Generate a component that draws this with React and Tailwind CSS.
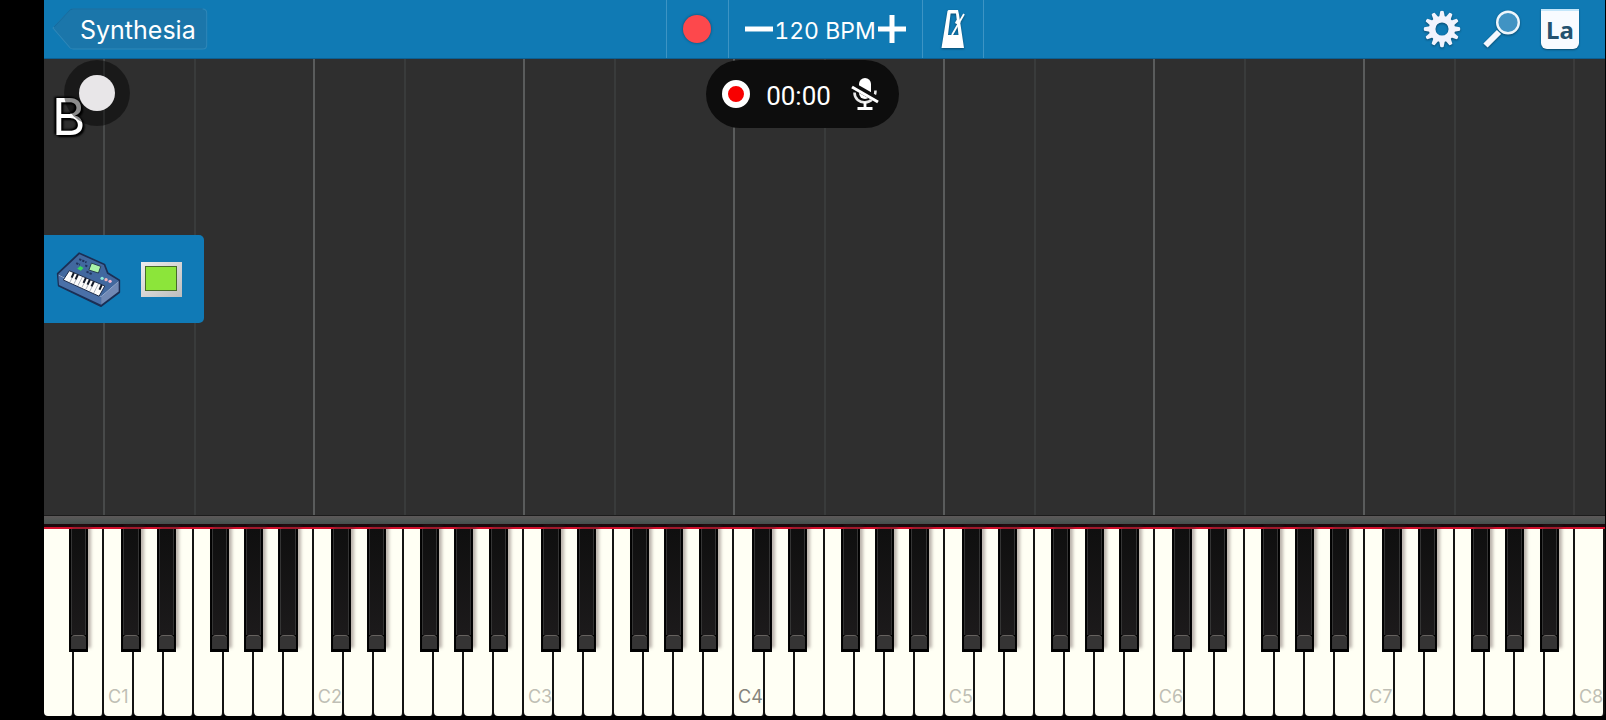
import React, { useState } from 'react';

const NOTES = ['C', 'D', 'E', 'F', 'G', 'A', 'B'];

// Where the sharp starts, relative to the white key on its left
const SHARP_LEFT = {
    C: 'left-[58%]',
    D: 'left-[76%]',
    F: 'left-[53%]',
    G: 'left-[67%]',
    A: 'left-[82%]'
};

// 52 white keys, A0 to C8
const whiteKeys = [
    { note: 'A', octave: 0 },
    { note: 'B', octave: 0 },
    ...[1, 2, 3, 4, 5, 6, 7].flatMap((octave) => NOTES.map((note) => ({ note, octave }))),
    { note: 'C', octave: 8 }
];

const octaves = [1, 2, 3, 4, 5, 6, 7];

const MetronomeIcon = () => (
    <svg viewBox="0 0 24 38" className="w-6 h-[38px] drop-shadow-[0_1px_1px_rgba(0,0,0,0.4)]">
        <path fill="#fff" fillRule="evenodd" d="M7.5 0h9.5l1 4.5 5 33.5H0.500L6.500 1zM9.600 3.500L7 25h10.500L15 3.500z" />
        <path d="M11 25L23 4" stroke="#fff" strokeWidth="1.800" />
        <path d="M15.500 10l4 2.200-1.600 3-4-2.200z" fill="#fff" />
    </svg>
);

const GearIcon = () => (
    <svg viewBox="0 0 38 38" className="w-[38px] h-[38px] drop-shadow-[0_1px_1px_rgba(0,0,0,0.4)]">
        {[0, 30, 60, 90, 120, 150, 180, 210, 240, 270, 300, 330].map((angle) => (
            <path key={angle} d="M16 8L17.300 1.200Q19 0.200 20.700 1.200L22 8z" fill="#f1f3fd" transform={`rotate(${angle} 19 19)`} />
        ))}
        <circle cx="19" cy="19" r="9.800" fill="none" stroke="#f1f3fd" strokeWidth="6.500" />
    </svg>
);

const SearchIcon = () => (
    <svg viewBox="0 0 38 38" className="w-[38px] h-[38px] drop-shadow-[0_1px_1px_rgba(0,0,0,0.4)]">
        <path d="M17 22L3.500 35.500" stroke="#f4f7fd" strokeWidth="6" />
        <circle cx="26" cy="12.500" r="10.800" fill="#4193c3" stroke="#eef6fc" strokeWidth="2.400" />
    </svg>
);

const MutedMicIcon = () => (
    <svg viewBox="0 0 28 32" className="w-7 h-8">
        <rect x="8" y="0" width="12" height="21" rx="6" fill="#fff" />
        <path d="M3.500 14.500C3.500 28 24.500 28 24.500 12.500" fill="none" stroke="#e8e8e8" strokeWidth="2.600" />
        <path d="M14 24v6M6.500 30.500h15" fill="none" stroke="#fff" strokeWidth="2.800" />
        <path d="M1 7L27 22" stroke="#0d0d0d" strokeWidth="6.500" />
        <path d="M1 9L27 24" stroke="#fff" strokeWidth="3" />
    </svg>
);

const SynthIcon = () => (
    <svg viewBox="0 0 196 168" className="w-[65px] h-14">
        <path d="M5 68L70 6l76 34 10 26 35 22v36l-55 42L8 104z" fill="#1c3158" stroke="#1b2f55" strokeWidth="5" strokeLinejoin="round" />
        <path d="M7 70L71 9l73 33 10 26 35 21-53 47z" fill="#41689f" />
        <path d="M7 72l129 65v25L9 102z" fill="#4a70a8" />
        <path d="M136 137l53-46v31l-53 40z" fill="#7189b5" />
        <path d="M8 72l128 65 52-45" fill="none" stroke="#90aad2" strokeWidth="3" />
        <path d="M40 59l107 46-17 31L22 87z" fill="#fbfbfb" stroke="#1d2c4b" strokeWidth="3" />
        {[1, 2, 3, 4, 5, 6, 7].map((i) => (
            <path key={i} d="M50 64l-14 27" stroke="#5b6577" strokeWidth="1.500" transform={`translate(${i * 12 - 6} ${i * 5.400 - 3})`} />
        ))}
        {[0, 1, 3, 4, 5, 7].map((i) => (
            <path key={i} d="M54 65l-7 15" stroke="#111827" strokeWidth="6" transform={`translate(${i * 12} ${i * 5.200})`} />
        ))}
        <path d="M107 36l28 10-7 20-29-9z" fill="#a9f3a8" stroke="#263c50" strokeWidth="3" />
        <path d="M73 45l10 6-8 8-11-6z" fill="#39da5a" />
        <path d="M70 24l22 10M61 36l11 5M88 43l9 4M92 62l18 8" stroke="#20335d" strokeWidth="6" strokeDasharray="7 3" />
        <circle cx="139" cy="82" r="5" fill="#8ee9d9" />
        <circle cx="151" cy="86" r="5" fill="#f2b5ba" />
        <circle cx="163" cy="91" r="5" fill="#f3b7d3" />
    </svg>
);

const Header = ({ bpm, setBpm, recording, setRecording }) => (
    <header className="h-[59px] shrink-0 bg-[#107ab4] border-b border-[#0c5f92] grid grid-cols-[1fr_auto_1fr] text-white">
        <div className="flex items-center pl-2">
            <a href="#home" className="relative flex items-center h-[42px] pl-7 pr-3">
                <svg viewBox="0 0 154 42" preserveAspectRatio="none" className="absolute inset-0 w-full h-full">
                    <path d="M1 20L18 2q1-1 3-1H149q4 0 4 4V37q0 4-4 4H21q-2 0-3-1z" fill="#1b76aa" stroke="#2f87b8" />
                    <path d="M2 19L18 2q1-1 3-1H149" fill="none" stroke="#12689c" />
                </svg>
                <span className="relative text-[25px] pt-1">Synthesia</span>
            </a>
        </div>

        <div className="flex border-x border-[#3d94c4]">
            <button type="button" aria-label="Record" onClick={() => setRecording(!recording)} className="w-[61px] flex items-center justify-center">
                <span className="w-7 h-7 rounded-full bg-[#fd484c] shadow-[0_0_3px_rgba(0,0,0,0.4)]" />
            </button>
            <div className="w-[195px] flex items-center justify-center border-x border-[#3d94c4]">
                <button type="button" aria-label="Slower" onClick={() => setBpm(bpm - 1)}>
                    <svg viewBox="0 0 28 28" className="w-7 h-7"><path d="M0 14h28" stroke="#fff" strokeWidth="5" /></svg>
                </button>
                <span className="w-[105px] text-center text-[23px] tabular-nums whitespace-nowrap pt-1">{bpm} BPM</span>
                <button type="button" aria-label="Faster" onClick={() => setBpm(bpm + 1)}>
                    <svg viewBox="0 0 28 28" className="w-7 h-7"><path d="M0 14h28M14 0v28" stroke="#fff" strokeWidth="5" /></svg>
                </button>
            </div>
            <button type="button" aria-label="Metronome" className="w-[60px] flex items-center justify-center">
                <MetronomeIcon />
            </button>
        </div>

        <div className="flex items-center justify-end gap-[21px] pr-[26px]">
            <button type="button" aria-label="Settings"><GearIcon /></button>
            <button type="button" aria-label="Search"><SearchIcon /></button>
            <button type="button" aria-label="Note labels" className="w-[38px] h-10 bg-[#f8fbff] border-t-2 border-[#c3e6fa] rounded-b-md shadow-[0_1px_2px_rgba(0,0,0,0.4)] text-[#24526f] text-2xl leading-8 font-bold font-['Noto_Sans',sans-serif]">
                La
            </button>
        </div>
    </header>
);

const Lanes = () => (
    <div className="absolute inset-0 flex">
        <div className="flex-[2] border-r-2 border-[#484a4a]" />
        {octaves.map((octave) => (
            <div key={octave} className={octave === 7 ? 'flex-[7] flex border-r-2 border-[#3b3b3b]' : 'flex-[7] flex border-r-2 border-[#5a5c5c]'}>
                <div className="flex-[3] border-r-2 border-[#393b3b]" />
                <div className="flex-[4]" />
            </div>
        ))}
        <div className="flex-1" />
    </div>
);

const Keyboard = () => (
    <div className="flex h-[191px] shrink-0 bg-black pb-1">
        {whiteKeys.map(({ note, octave }) => (
            <div key={note + octave} className="relative flex-1">
                <button
                    type="button"
                    aria-label={`${note}${octave}`}
                    className="w-full h-full flex items-end bg-[#fffff4] border-r-2 border-[#141412] rounded-b-[4px] pl-1 pb-[5px]"
                >
                    {note === 'C' && (
                        <span className={octave === 4 ? 'text-lg text-[#85847c]' : 'text-lg text-[#c0bfb5]'}>
                            C{octave}
                        </span>
                    )}
                </button>
                {SHARP_LEFT[note] && octave < 8 && (
                    <button
                        type="button"
                        aria-label={`${note}#${octave}`}
                        className={`absolute top-0 z-10 w-[64%] h-[123px] bg-black border-x border-[#050505] shadow-[3px_-4px_3px_rgba(60,40,40,0.35)] flex flex-col px-px pb-[3px] ${SHARP_LEFT[note]}`}
                    >
                        <span className="flex-1 w-full bg-linear-to-b from-[#0f0f0f] to-[#1c1a1b] border-x border-[#343434]" />
                        <span className="h-[14px] w-full bg-[#353434] border-t border-[#66625f] rounded-t-sm" />
                    </button>
                )}
            </div>
        ))}
    </div>
);

const App = () => {
    const [bpm, setBpm] = useState(120);
    const [recording, setRecording] = useState(false);
    const [muted, setMuted] = useState(true);

    return (
        <div className="min-h-screen flex flex-col bg-black pl-11 pr-px overflow-hidden font-[Inter,sans-serif]">
            <Header bpm={bpm} setBpm={setBpm} recording={recording} setRecording={setRecording} />

            <main className="relative flex-1 flex flex-col bg-[#2f2f2f] text-white">
                <Lanes />

                {/* Centred on the whole window, so make up for the black strip on the left */}
                <div className="relative flex items-center self-center gap-4 h-[68px] mt-px mr-11 pl-4 pr-5 rounded-full bg-[#0d0d0d] font-[Roboto,sans-serif]">
                    <span className="w-7 h-7 rounded-full border-[6px] border-white bg-[#f80000]" />
                    <time className="text-[26px] pt-1">00:00</time>
                    <button type="button" aria-label="Toggle microphone" aria-pressed={muted} onClick={() => setMuted(!muted)} className="ml-1">
                        <MutedMicIcon />
                    </button>
                </div>

                {/* Last detected note */}
                <span className="absolute left-2 top-7 text-[51px] leading-[60px] [text-shadow:0_0_3px_#000,0_0_3px_#000,2px_2px_2px_#000,-2px_-1px_2px_#000]">
                    B
                </span>

                {/* Touch indicator */}
                <div className="absolute left-5 top-px w-[66px] h-[66px] rounded-full bg-black/45 flex items-center justify-center">
                    <span className="w-9 h-9 rounded-full bg-[#e8e6e8]" />
                </div>

                <section className="relative mt-[107px] w-40 h-[88px] flex items-center gap-5 pl-3 rounded-r-[5px] bg-[#107ab6]">
                    <SynthIcon />
                    <button type="button" aria-label="Track colour" className="w-[41px] h-[35px] bg-linear-to-br from-[#eeeeee] to-[#bdbdbd] flex pl-1 pt-1">
                        <span className="w-8 h-[25px] bg-[#8ce53a] border border-[#466c28]" />
                    </button>
                </section>
            </main>

            <div className="h-[9px] shrink-0 bg-linear-to-b from-[#5c5858] to-[#465250] border-t border-[#1c1c1c]" />
            <div className="h-[3px] shrink-0 bg-[#1c070b]" />
            <div className="h-0.5 shrink-0 bg-[#d3122e]" />
            <Keyboard />
        </div>
    );
};

export default App;
